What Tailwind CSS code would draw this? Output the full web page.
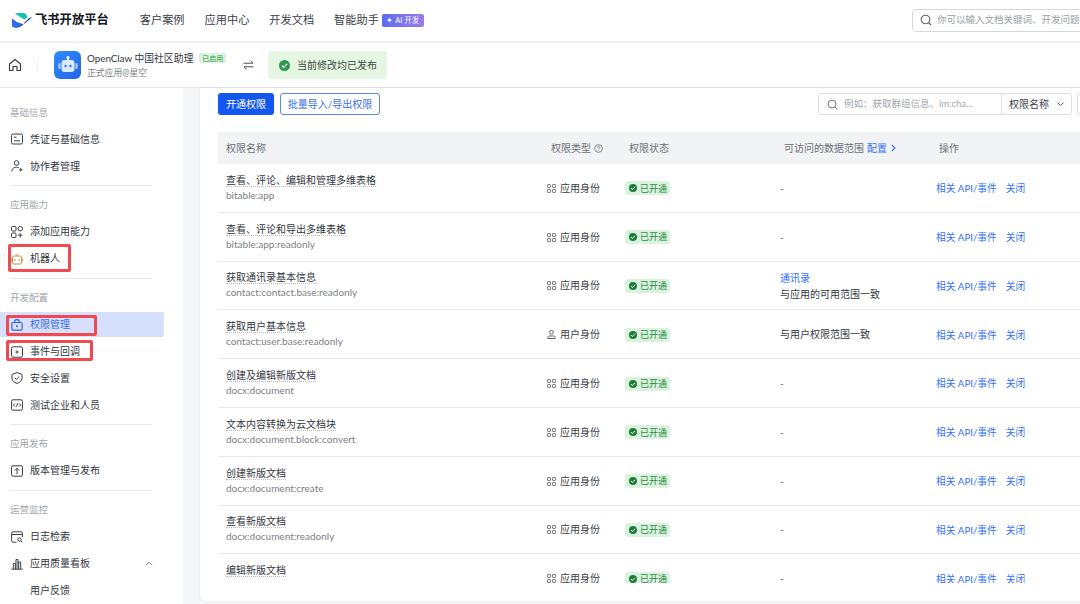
<!DOCTYPE html>
<html lang="zh-CN">

<head>
  <meta charset="utf-8" />
  <meta name="viewport" content="width=device-width, initial-scale=1" />
  <title>飞书开放平台 - 权限管理</title>
  <script src="https://cdn.jsdelivr.net/npm/@tailwindcss/browser@4"></script>
</head>

<body class="relative h-screen overflow-hidden bg-white text-[10px] text-[#1f2329] font-['Lato','Noto_Sans_CJK_SC',sans-serif] flex flex-col">
  <!-- 顶部导航 -->
  <header class="h-[43px] shrink-0 border-b-2 border-[#f1f2f3] flex items-center pl-[12px]">
    <svg class="w-[20px] h-[16px] mr-[3px]" viewBox="0 0 20 16">
      <path d="M3 0h9.500c1.300 1 2.300 2.400 3 4l-3 2.600C10 5.200 5.600 2.800 3 0z" fill="#14c0b2" />
      <path d="M0 5.500c3 3 6.500 5 10.500 5.500 2-.3 3.500-1 4.500-2.500l5-4c-1 .1-2.500.2-3.500 1L13 9c-2 3-4 5-7 5.500-2.500.3-4.500-.5-6-1.500z" fill="#1c3ea8" />
      <path d="M0 5.500c3 3 6.500 5 10 5.500-1.500 2-3.500 3.500-6 3.700-1.500.1-3-.5-4-1.200z" fill="#2f6bf0" />
    </svg>
    <span class="text-[12.3px] font-bold text-[#16191f]">飞书开放平台</span>
    <nav class="flex items-center gap-[20px] ml-[31px] text-[11.2px] text-[#3b4047]">
      <span>客户案例</span>
      <span>应用中心</span>
      <span>开发文档</span>
      <span class="flex items-center">智能助手
        <span class="ml-[3px] h-[13px] w-[42px] rounded-[2px] bg-gradient-to-r from-[#5b6cf5] to-[#9a7be8] text-white text-[7.5px] flex items-center justify-center gap-[2px]">✦ AI 开发</span>
      </span>
    </nav>
    <div class="ml-auto mr-[-200px] w-[368px] h-[23px] mb-[1px] border border-[#d5d8dd] rounded-[4px] flex items-center pl-[7px] text-[#9a9fa6] text-[9.5px]">
      <svg class="w-[12px] h-[12px] mr-[5px] text-[#5f656d]" viewBox="0 0 12 12" fill="none" stroke="currentColor" stroke-width="1.100">
        <circle cx="5.500" cy="5.500" r="4.300" />
        <path d="M8.500 8.500l2.500 2.500" />
      </svg>
      你可以输入文档关键词、开发问题
    </div>
  </header>

  <!-- 应用信息栏 -->
  <div class="h-[45px] shrink-0 border-b border-[#e4e6e9] flex items-center">
    <svg class="w-[14px] h-[14px] ml-[8px] text-[#3b4047]" viewBox="0 0 14 14" fill="none" stroke="currentColor" stroke-width="1.200" stroke-linejoin="round">
      <path d="M1.500 6L7 1.500 12.500 6v6.500h-3.500V8.500H5v4H1.500z" />
    </svg>
    <div class="w-px h-[12px] bg-[#eceef0] ml-[15px]"></div>
    <div class="w-[27px] h-[28px] ml-[16px] rounded-[6px] bg-gradient-to-br from-[#2f8cff] to-[#2463e8] flex items-center justify-center">
      <svg class="w-[20px] h-[18px]" viewBox="0 0 20 18">
        <rect x="9" y="1" width="2" height="3" fill="#dce9ff" />
        <circle cx="10" cy="1.500" r="1.500" fill="#fff" />
        <rect x="0.500" y="7" width="2" height="6" rx="1" fill="#bcd6ff" />
        <rect x="17.500" y="7" width="2" height="6" rx="1" fill="#bcd6ff" />
        <rect x="3.500" y="4" width="13" height="12" rx="3" fill="#dbe9ff" />
        <circle cx="7.500" cy="10" r="1.200" fill="#2f78f0" />
        <circle cx="12.500" cy="10" r="1.200" fill="#2f78f0" />
      </svg>
    </div>
    <div class="ml-[6px] w-[144px] flex flex-col gap-[3px] pt-[1px]">
      <div class="flex items-center text-[#33383f] text-[9.8px] leading-[12px]">
        OpenClaw 中国社区助理
        <span class="ml-[6px] px-[3px] h-[10px] bg-[#daf3dc] text-[#2d9a4b] text-[7px] rounded-[2px] flex items-center">已启用</span>
      </div>
      <div class="text-[#7b8088] text-[8.8px] leading-[12px]">正式应用@星空</div>
    </div>
    <svg class="w-[11px] h-[10px] ml-[12px] text-[#4e535a]" viewBox="0 0 11 10" fill="none" stroke="currentColor" stroke-width="1">
      <path d="M0.500 3.200h9.500L7.500 0.800M10.500 6.800H1l2.500 2.400" />
    </svg>
    <div class="ml-[14px] w-[119px] h-[28px] rounded-[3px] bg-[#e5f6e3] flex items-center pl-[11px] text-[#3c4a40]">
      <svg class="w-[11px] h-[11px] mr-[7px]" viewBox="0 0 12 12">
        <circle cx="6" cy="6" r="6" fill="#2c9a4b" />
        <path d="M3.200 6.100l2 2 3.600-3.800" fill="none" stroke="#fff" stroke-width="1.300" />
      </svg>
      当前修改均已发布
    </div>
  </div>

  <div class="flex-1 min-h-0 flex bg-[#f5f6f7]">
    <!-- 侧边栏 -->
    <aside class="w-[183px] shrink-0 bg-white pt-[11px] text-[#33383f]">
      <div class="h-[27px] pl-[10px] pt-[2px] flex items-center text-[#a2a6ac] text-[9.5px]">基础信息</div>
      <div class="h-[26.8px] pl-[11px] flex items-center gap-[7px]">
        <svg class="w-[12px] h-[12px]" viewBox="0 0 12 12" fill="none" stroke="#3b4047" stroke-width="1"><rect x="0.500" y="1" width="11" height="10" rx="1.500" /><path d="M3 4.200h2.500M3 7.800h6" /></svg>
        凭证与基础信息
      </div>
      <div class="h-[26.8px] pl-[11px] flex items-center gap-[7px]">
        <svg class="w-[12px] h-[12px]" viewBox="0 0 12 12" fill="none" stroke="#3b4047" stroke-width="1"><circle cx="5.500" cy="3" r="2.300" /><path d="M0.800 11.500c0-3 2-4.300 4.700-4.300 1 0 1.800.2 2.400.6M8 9.800h3.500M9.800 8v3.500" /></svg>
        协作者管理
      </div>
      <div class="border-t border-[#e8e9eb] mx-[10px] w-[142px] my-[5.5px]"></div>

      <div class="h-[27px] pl-[10px] pt-[1px] flex items-center text-[#a2a6ac] text-[9.5px]">应用能力</div>
      <div class="h-[26.8px] pl-[11px] flex items-center gap-[7px]">
        <svg class="w-[12px] h-[12px]" viewBox="0 0 12 12" fill="none" stroke="#3b4047" stroke-width="1"><rect x="0.500" y="0.500" width="4.500" height="4.500" rx="1" /><rect x="7" y="0.500" width="4.500" height="4.500" rx="2.200" /><rect x="0.500" y="7" width="4.500" height="4.500" rx="1" /><path d="M7 9.200h4.500M9.200 7v4.500" /></svg>
        添加应用能力
      </div>
      <div class="h-[26.8px] pl-[11px] flex items-center gap-[7px]">
        <svg class="w-[12px] h-[12px]" viewBox="0 0 12 12" fill="none" stroke="#d98a2b" stroke-width="1"><rect x="1.500" y="3" width="9" height="8" rx="1.500" /><path d="M6 3V0.800M0.300 6v2.500M11.700 6v2.500" /><path d="M4 6.500v1M8 6.500v1" stroke="#3b4047" /></svg>
        机器人
      </div>
      <div class="border-t border-[#e8e9eb] mx-[10px] w-[142px] my-[5.5px]"></div>

      <div class="h-[27px] pl-[10px] flex items-center text-[#a2a6ac] text-[9.5px]">开发配置</div>
      <div class="h-[25px] my-[1px] w-[164px] pl-[11px] bg-[#d6dffb] rounded-r-[2px] flex items-center gap-[7px] text-[#3a6fe8]">
        <svg class="w-[12px] h-[12px]" viewBox="0 0 12 12" fill="none" stroke="#2f63e6" stroke-width="1.200"><rect x="0.800" y="3.500" width="10.400" height="7.700" rx="1.500" /><path d="M3.800 3.500V2.500c0-2.400 4.400-2.400 4.400 0v1" /><circle cx="6" cy="7.300" r="1" fill="#2f63e6" stroke="none" /></svg>
        权限管理
      </div>
      <div class="h-[26.8px] pl-[11px] flex items-center gap-[7px]">
        <svg class="w-[12px] h-[12px]" viewBox="0 0 12 12" fill="none" stroke="#3b4047" stroke-width="1"><rect x="0.500" y="0.800" width="11" height="10.400" rx="1.500" /><path d="M4.500 6H7.500M6 4.500v3" /></svg>
        事件与回调
      </div>
      <div class="h-[26.8px] pl-[11px] flex items-center gap-[7px]">
        <svg class="w-[12px] h-[12px]" viewBox="0 0 12 12" fill="none" stroke="#3b4047" stroke-width="1"><path d="M6 0.600l5 1.800v4c0 2.600-2.400 4.200-5 5-2.600-.8-5-2.400-5-5v-4z" /><path d="M3.800 5.800l1.600 1.600 2.800-2.800" /></svg>
        安全设置
      </div>
      <div class="h-[26.8px] pl-[11px] flex items-center gap-[7px]">
        <svg class="w-[12px] h-[12px]" viewBox="0 0 12 12" fill="none" stroke="#3b4047" stroke-width="1"><rect x="0.500" y="0.800" width="11" height="10.400" rx="1.500" /><path d="M3.800 4.500L2.300 6l1.500 1.500M8.200 4.500L9.700 6 8.200 7.500M6.800 4.200L5.200 7.800" /></svg>
        测试企业和人员
      </div>
      <div class="border-t border-[#e8e9eb] mx-[10px] w-[142px] my-[5.5px]"></div>

      <div class="h-[27px] pl-[10px] flex items-center text-[#a2a6ac] text-[9.5px]">应用发布</div>
      <div class="h-[26.8px] pl-[11px] flex items-center gap-[7px]">
        <svg class="w-[12px] h-[12px]" viewBox="0 0 12 12" fill="none" stroke="#3b4047" stroke-width="1"><rect x="0.500" y="0.800" width="11" height="10.400" rx="1.500" /><path d="M6 9V3.500M3.800 5.500L6 3.300l2.200 2.200" /></svg>
        版本管理与发布
      </div>
      <div class="border-t border-[#e8e9eb] mx-[10px] w-[142px] my-[5.5px]"></div>

      <div class="h-[27px] pl-[10px] flex items-center text-[#a2a6ac] text-[9.5px]">运营监控</div>
      <div class="h-[26.8px] pl-[11px] flex items-center gap-[7px]">
        <svg class="w-[12px] h-[12px]" viewBox="0 0 12 12" fill="none" stroke="#3b4047" stroke-width="1"><path d="M5.500 11.200H2C1.200 11.200.6 10.600.6 9.800V2.200C.6 1.400 1.200.8 2 .8h8c.8 0 1.400.6 1.400 1.400v4M.6 3.500h10.800" /><circle cx="8.500" cy="8.500" r="1.700" /><path d="M9.800 9.800l1.500 1.500" /></svg>
        日志检索
      </div>
      <div class="h-[26.8px] pl-[11px] pr-[30px] flex items-center gap-[7px]">
        <svg class="w-[12px] h-[12px]" viewBox="0 0 12 12" fill="none" stroke="#3b4047" stroke-width="1"><path d="M0.300 11.200h11.400M2.300 11V5.500h2V11M5 11V1.500h2V11M7.700 11V4h2v7" /></svg>
        应用质量看板
        <svg class="ml-auto w-[8px] h-[5px]" viewBox="0 0 8 5" fill="none" stroke="#8f959e" stroke-width="1"><path d="M0.800 4.200L4 1l3.200 3.200" /></svg>
      </div>
      <div class="h-[26.8px] pl-[30px] flex items-center">用户反馈</div>
    </aside>

    <!-- 主内容 -->
    <main class="ml-[17px] flex-1 min-w-0 h-[513px] bg-white rounded-bl-[6px] shadow-[0_0_2px_rgba(0,0,0,0.08)] pl-[18px] pt-[5px] overflow-hidden">
      <div class="h-[22px] flex items-center">
        <button class="w-[56px] h-[22px] shrink-0 rounded-[3px] bg-[#1456f0] text-white">开通权限</button>
        <button class="ml-[6px] w-[100px] h-[22px] shrink-0 rounded-[3px] border border-[#5b8bec] text-[#3a6fe8]">批量导入/导出权限</button>
        <div class="ml-[438px] w-[254px] h-[22px] shrink-0 border border-[#dee0e3] rounded-[3px] flex items-center text-[#a2a6ac] text-[9.5px]">
          <svg class="w-[11px] h-[11px] ml-[8px] mr-[6px] text-[#5f656d]" viewBox="0 0 12 12" fill="none" stroke="currentColor" stroke-width="1"><circle cx="5.500" cy="5.500" r="4.300" /><path d="M8.500 8.500l2.500 2.500" /></svg>
          <span class="w-[157px] whitespace-nowrap">例如：获取群组信息、im:cha...</span>
          <span class="h-full border-l border-[#dee0e3] pl-[7px] flex items-center text-[#3b4047] text-[10px]">权限名称
            <svg class="ml-[8px] w-[7px] h-[4px]" viewBox="0 0 7 4" fill="none" stroke="#6b7078"><path d="M0.500 0.500L3.500 3.500 6.500 0.500" /></svg>
          </span>
        </div>
        <div class="ml-[5px] w-[30px] h-[22px] shrink-0 border border-[#dee0e3] rounded-[3px]"></div>
      </div>

      <!-- 表头 -->
      <div class="mt-[17px] h-[32px] bg-[#f2f3f5] flex items-center text-[#6d7278]">
        <div class="w-[329px] pl-[8px]">权限名称</div>
        <div class="w-[78px] pl-[4px] flex items-center gap-[3px]">权限类型
          <svg class="w-[9px] h-[9px]" viewBox="0 0 10 10" fill="none" stroke="#6d7278" stroke-width="0.900"><circle cx="5" cy="5" r="4.300" /><path d="M3.600 4c0-1.900 2.800-1.900 2.800 0 0 1-1.400 1-1.400 2M5 7v.8" /></svg>
        </div>
        <div class="w-[155px] pl-[4px]">权限状态</div>
        <div class="w-[156px] pl-[4px] flex items-center whitespace-nowrap">可访问的数据范围
          <span class="ml-[3px] text-[#3370ff]">配置</span>
          <svg class="ml-[4px] w-[5px] h-[8px] shrink-0" viewBox="0 0 5 8" fill="none" stroke="#3370ff" stroke-width="1.200"><path d="M0.800 0.800L4 4 0.800 7.200" /></svg>
        </div>
        <div class="pl-[3px]">操作</div>
      </div>

      <div id="permissionRows" class="h-[419px] overflow-hidden"></div>
    </main>
  </div>

  <!-- 红框标注 -->
  <div class="absolute left-[8px] top-[244px] w-[63px] h-[28px] border-[3px] border-[#ee4a4f] rounded-[2px]"></div>
  <div class="absolute left-[6px] top-[315px] w-[91px] h-[21px] border-[3px] border-[#ee4a4f] rounded-[2px]"></div>
  <div class="absolute left-[6px] top-[340px] w-[87px] h-[21px] border-[3px] border-[#ee4a4f] rounded-[2px]"></div>

  <script>
    const appIcon = '<svg class="w-[9px] h-[9px]" viewBox="0 0 9 9" fill="none" stroke="#4e535a" stroke-width="0.900"><rect x="0.500" y="0.500" width="3" height="3" rx="0.800" /><rect x="5.500" y="0.500" width="3" height="3" rx="0.800" /><rect x="0.500" y="5.500" width="3" height="3" rx="0.800" /><rect x="5.500" y="5.500" width="3" height="3" rx="0.800" /></svg>';
    const userIcon = '<svg class="w-[9px] h-[9px]" viewBox="0 0 9 9" fill="none" stroke="#4e535a" stroke-width="0.900"><circle cx="4.500" cy="2.300" r="1.800" /><path d="M0.800 8.500V7.500c0-1 .8-1.500 1.700-1.500h4c.9 0 1.700.5 1.700 1.500v1z" /></svg>';

    const permissions = [
      { title: '查看、评论、编辑和管理多维表格', scope: 'bitable:app' },
      { title: '查看、评论和导出多维表格', scope: 'bitable:app:readonly' },
      { title: '获取通讯录基本信息', scope: 'contact:contact.base:readonly', range: 'contact' },
      { title: '获取用户基本信息', scope: 'contact:user.base:readonly', user: true },
      { title: '创建及编辑新版文档', scope: 'docx:document' },
      { title: '文本内容转换为云文档块', scope: 'docx:document.block:convert' },
      { title: '创建新版文档', scope: 'docx:document:create' },
      { title: '查看新版文档', scope: 'docx:document:readonly' },
      { title: '编辑新版文档', scope: '\u00a0' }
    ];

    function rangeCell(p) {
      if (p.range) return '<div class="text-[#3370ff] leading-[16px]">通讯录</div><div class="text-[#33383f] leading-[16px]">与应用的可用范围一致</div>';
      if (p.user) return '<span class="text-[#33383f]">与用户权限范围一致</span>';
      return '<span class="text-[#646a73]">-</span>';
    }

    document.getElementById('permissionRows').innerHTML = permissions.map(p => `
      <div class="h-[48.8px] border-b border-[#e8e9eb] flex items-center">
        <div class="w-[329px] pl-[8px]">
          <div class="leading-[15px]"><span class="text-[#33383f] border-b border-dotted border-[#b9bdc3]">${p.title}</span></div>
          <div class="leading-[15px] text-[#7b8088]">${p.scope}</div>
        </div>
        <div class="w-[78px] flex items-center gap-[4px] text-[#3b4047] mt-[1px]">${p.user ? userIcon : appIcon}${p.user ? '用户身份' : '应用身份'}</div>
        <div class="w-[155px] mt-[1px]">
          <span class="w-[45px] h-[14px] rounded-[3px] bg-[#d9f3dc] text-[#2f8a49] text-[9px] flex items-center pl-[4px] gap-[3px]">
            <svg class="w-[8px] h-[8px]" viewBox="0 0 8 8"><circle cx="4" cy="4" r="4" fill="#1f7d3c" /><path d="M2 4.100l1.400 1.400L6 2.800" fill="none" stroke="#fff" stroke-width="1" /></svg>已开通
          </span>
        </div>
        <div class="w-[156px] mt-[1px]">${rangeCell(p)}</div>
        <div class="flex items-center gap-[9px] text-[#3370ff] text-[9.7px] whitespace-nowrap mt-[1px]"><span>相关 API/事件</span><span>关闭</span></div>
      </div>
    `).join('');
  </script>
</body>

</html>
